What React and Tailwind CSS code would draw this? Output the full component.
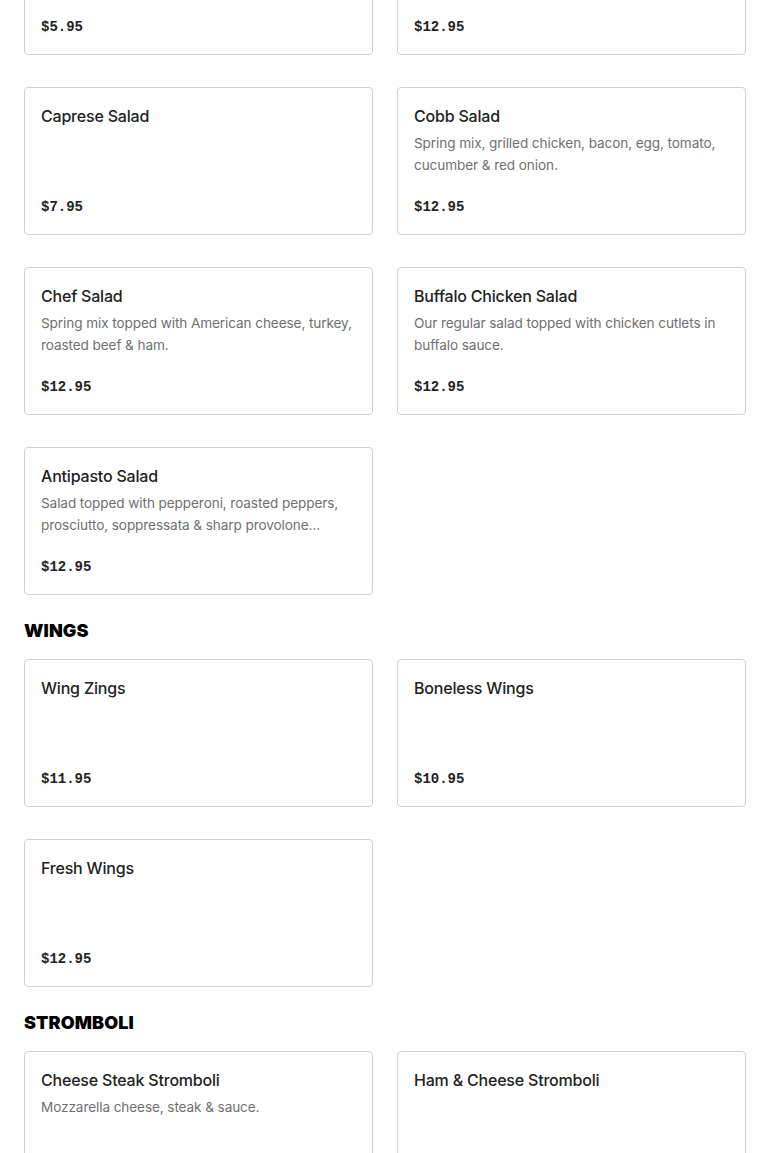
const font = { fontFamily: 'Inter, "Liberation Sans", sans-serif' };

function Card({ title, desc, price }) {
  return (
    <div className="rounded-[4px] border border-[#d2d2d2] bg-white px-4 pt-4 pb-[15px] flex flex-col">
      <div className="shrink-0 text-[16px] leading-6 font-medium text-[#222] tracking-[-0.2px]">{title}</div>
      <div className="shrink-0 mt-1 h-[44px] text-[13.6px] leading-[22px] text-[#707070] line-clamp-2 tracking-[-0.1px]">{desc}</div>
      <div
        className="shrink-0 mt-[19px] text-[14px] leading-6 font-bold text-[#222]"
        style={{ fontFamily: '"Liberation Mono", "DejaVu Sans Mono", monospace' }}
      >
        {price}
      </div>
    </div>
  );
}

function Heading({ children }) {
  return (
    <h2 className="mt-[22px] mb-[14px] text-[18px] leading-7 font-black text-black tracking-[0.1px]">{children}</h2>
  );
}

export default function App() {
  return (
    <div className="bg-white min-h-[1153px] px-6 overflow-hidden" style={font}>
      <div className="-mt-[93px] grid grid-cols-2 gap-x-6 gap-y-8">
        <Card title="House Salad" desc="" price="$5.95" />
        <Card title="Greek Salad" desc="" price="$12.95" />
        <Card title="Caprese Salad" desc="" price="$7.95" />
        <Card title="Cobb Salad" desc="Spring mix, grilled chicken, bacon, egg, tomato, cucumber & red onion." price="$12.95" />
        <Card title="Chef Salad" desc="Spring mix topped with American cheese, turkey, roasted beef & ham." price="$12.95" />
        <Card title="Buffalo Chicken Salad" desc="Our regular salad topped with chicken cutlets in buffalo sauce." price="$12.95" />
        <Card title="Antipasto Salad" desc="Salad topped with pepperoni, roasted peppers, prosciutto, soppressata & sharp provolone cheese over spring mix." price="$12.95" />
      </div>
      <Heading>WINGS</Heading>
      <div className="grid grid-cols-2 gap-x-6 gap-y-8">
        <Card title="Wing Zings" desc="" price="$11.95" />
        <Card title="Boneless Wings" desc="" price="$10.95" />
        <Card title="Fresh Wings" desc="" price="$12.95" />
      </div>
      <Heading>STROMBOLI</Heading>
      <div className="grid grid-cols-2 gap-x-6 gap-y-8">
        <Card title="Cheese Steak Stromboli" desc="Mozzarella cheese, steak & sauce." price="$12.95" />
        <Card title="Ham & Cheese Stromboli" desc="" price="$12.95" />
      </div>
    </div>
  );
}
